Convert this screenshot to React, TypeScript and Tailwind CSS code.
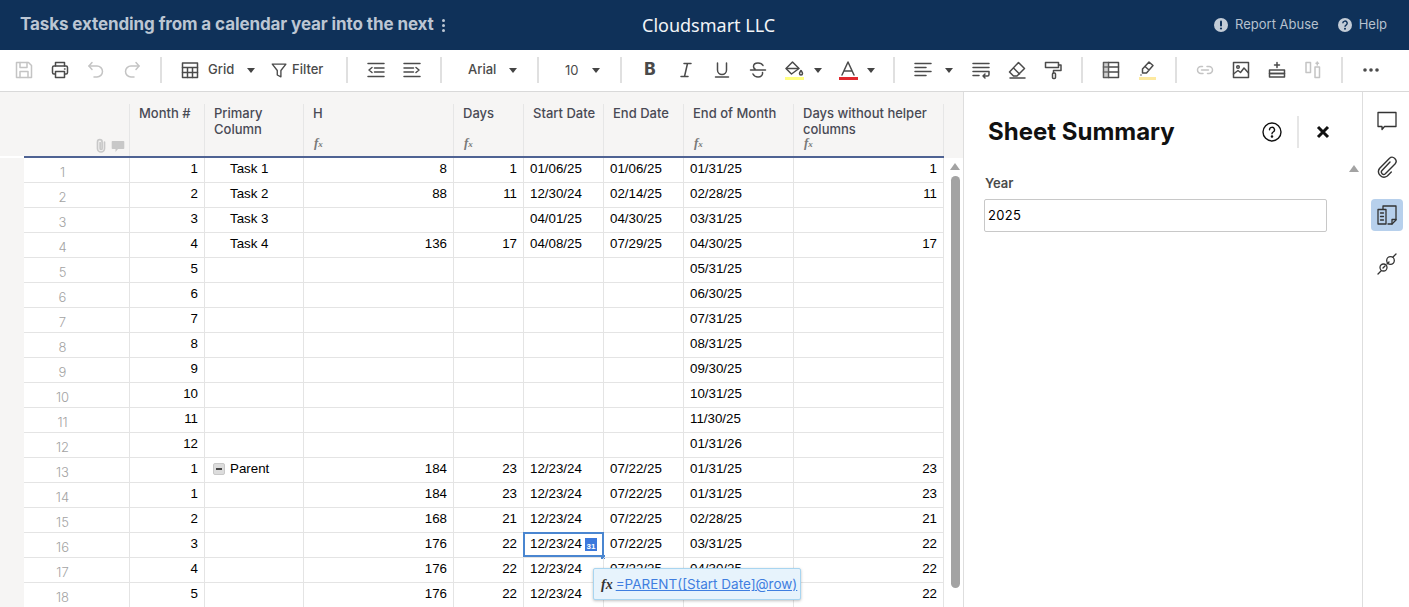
import React from "react";

const S = ({ children, w = 22, h = 22, vb = "0 0 22 22", c = "#4b4b4b", sw = 1.5 }: any) => (
  <svg width={w} height={h} viewBox={vb} fill="none" stroke={c} strokeWidth={sw} strokeLinecap="round" strokeLinejoin="round">{children}</svg>
);
const Btn = ({ children, w = "w-9" }: any) => <div className={`${w} h-full flex items-center justify-center shrink-0`}>{children}</div>;
const Sep = ({ ml, mr }: { ml: string; mr: string }) => <div className={`w-[2px] h-[26px] bg-[#e0e0e0] shrink-0 ${ml} ${mr}`} />;
const Caret = ({ cls = "" }: { cls?: string }) => (
  <svg width="8" height="5" viewBox="0 0 8 5" className={`shrink-0 ${cls}`}><path d="M0 0h8L4 5z" fill="#444" /></svg>
);
const Fx = () => (
  <span className="font-['Liberation_Serif',serif] italic font-bold text-[13px] leading-none text-[#7a7a7a]">f<span className="text-[9px]">x</span></span>
);

const widths = ["w-[75px]", "w-[99px]", "w-[150px]", "w-[70px]", "w-[80px]", "w-[80px]", "w-[110px]", "w-[150px]"];

type Row = [string, string, string, string, string, string, string, string];
const rows: Row[] = [
  ["1", "Task 1", "8", "1", "01/06/25", "01/06/25", "01/31/25", "1"],
  ["2", "Task 2", "88", "11", "12/30/24", "02/14/25", "02/28/25", "11"],
  ["3", "Task 3", "", "", "04/01/25", "04/30/25", "03/31/25", ""],
  ["4", "Task 4", "136", "17", "04/08/25", "07/29/25", "04/30/25", "17"],
  ["5", "", "", "", "", "", "05/31/25", ""],
  ["6", "", "", "", "", "", "06/30/25", ""],
  ["7", "", "", "", "", "", "07/31/25", ""],
  ["8", "", "", "", "", "", "08/31/25", ""],
  ["9", "", "", "", "", "", "09/30/25", ""],
  ["10", "", "", "", "", "", "10/31/25", ""],
  ["11", "", "", "", "", "", "11/30/25", ""],
  ["12", "", "", "", "", "", "01/31/26", ""],
  ["1", "Parent", "184", "23", "12/23/24", "07/22/25", "01/31/25", "23"],
  ["1", "", "184", "23", "12/23/24", "07/22/25", "01/31/25", "23"],
  ["2", "", "168", "21", "12/23/24", "07/22/25", "02/28/25", "21"],
  ["3", "", "176", "22", "12/23/24", "07/22/25", "03/31/25", "22"],
  ["4", "", "176", "22", "12/23/24", "07/22/25", "04/30/25", "22"],
  ["5", "", "176", "22", "12/23/24", "07/22/25", "05/31/25", "22"],
];

const heads = [
  { t: "Month #" },
  { t: "Primary Column" },
  { t: "H", fx: true },
  { t: "Days", fx: true },
  { t: "Start Date" },
  { t: "End Date" },
  { t: "End of Month", fx: true },
  { t: "Days without helper columns", fx: true },
];

function Toolbar() {
  const txt = "text-[13px] font-medium text-[#4a4a4a] font-['Inter',sans-serif]";
  return (
    <div className="h-[42px] shrink-0 bg-white border-b border-[#d9d9d9] flex items-center pl-[6px] pb-px">
      <Btn><S c="#c4c4c4"><path d="M3.5 3.5h12l3 3v12h-15z" /><path d="M7 3.5v5h7v-5M7 18.5v-6h8v6" /></S></Btn>
      <Btn><S><path d="M6.5 7V3.5h9V7" /><rect x="3.5" y="7" width="15" height="8" rx="1.5" /><rect x="6.5" y="12.5" width="9" height="6" fill="#fff" /><path d="M15.5 10h.5" /></S></Btn>
      <Btn><S c="#c4c4c4"><path d="M7 3.5 4 7l3 3.5" /><path d="M4 7h8a5 5 0 0 1 0 11H9" /></S></Btn>
      <Btn><S c="#c4c4c4"><path d="m15 3.5 3 3.5-3 3.5" /><path d="M18 7h-8a5 5 0 0 0 0 11h3" /></S></Btn>
      <Sep ml="ml-[10px]" mr="mr-[10px]" />
      <Btn><S><rect x="3.5" y="4" width="15" height="14.5" /><path d="M3.5 8.5h15M3.5 13.5h15M8.5 8.5v10M13.5 8.5v10" /></S></Btn>
      <span className={`${txt} w-[39px] shrink-0`}>Grid</span>
      <Caret />
      <div className="w-[15px] shrink-0" />
      <S w={20} h={22}><path d="M2.5 4.5h15l-5.5 7v7l-4-2v-5z" /></S>
      <span className={`${txt} ml-[2px] w-[32px] shrink-0`}>Filter</span>
      <Sep ml="ml-[22px]" mr="mr-[10px]" />
      <Btn><S><path d="M3 4.5h16M9.5 9h9.5M9.5 13h9.5M3 17.5h16M7 8.5 4 11l3 2.5" /></S></Btn>
      <Btn><S><path d="M3 4.5h16M3 9h9.5M3 13h9.5M3 17.5h16M15 8.5l3 2.5-3 2.5" /></S></Btn>
      <Sep ml="ml-[10px]" mr="mr-[26px]" />
      <span className={`${txt} w-[41px] shrink-0`}>Arial</span>
      <Caret />
      <Sep ml="ml-[20px]" mr="mr-[26px]" />
      <span className={`${txt} text-sm font-normal w-[27px] shrink-0`}>10</span>
      <Caret />
      <Sep ml="ml-[20px]" mr="mr-[10px]" />
      <Btn><span className="font-['Inter',sans-serif] font-extrabold text-[17px] text-[#4a4a4a]">B</span></Btn>
      <Btn><S><path d="M9 4.5h7M6 17.5h7M12.5 4.5l-3 13" /></S></Btn>
      <Btn><S><path d="M6.5 4v7a4.5 4.5 0 0 0 9 0V4M4.5 18h13" /></S></Btn>
      <Btn><S><path d="M16 6.5C15 4.5 13 4 11 4c-3 0-4.5 1.500-4.500 3.500 0 1 .5 2 1.500 2.500M3.500 11h15M15.500 13.500c.5 2.500-1.500 4.500-4.500 4.500-2.500 0-4-1-5-3" /></S></Btn>
      <Btn>
        <div className="flex flex-col items-center">
          <S w={20} h={17} vb="0 0 20 17"><path d="M8.500 2 2 8.500 7.500 14 15 8.500z" /><path d="M2.500 8.500h12" /><path d="M17 10.500c1 1.500 1.500 2 1.500 3a1.500 1.500 0 0 1-3 0c0-1 .5-1.500 1.500-3z" /></S>
          <div className="w-[19px] h-[3px] bg-[#ffff80]" />
        </div>
      </Btn>
      <Caret cls="ml-[2px]" />
      <div className="w-[8px] shrink-0" />
      <Btn>
        <div className="flex flex-col items-center">
          <S w={18} h={17} vb="0 0 18 17"><path d="M3 15 9 2l6 13M5 11h8" /></S>
          <div className="w-[19px] h-[3px] bg-[#e0282e]" />
        </div>
      </Btn>
      <Caret cls="ml-[1px]" />
      <Sep ml="ml-[18px]" mr="mr-[10px]" />
      <Btn><S><path d="M3 4.500h16M3 8.500h11M3 12.500h16M3 16.500h11" /></S></Btn>
      <Caret cls="ml-[4px]" />
      <div className="w-[10px] shrink-0" />
      <Btn><S><path d="M3 4.500h16M3 8.500h16M3 12.500h16M3 16.500h6M19 12.500v3a1.500 1.500 0 0 1-1.500 1.500H13M15 15l-2 2 2 2" /></S></Btn>
      <Btn><S><path d="m12.500 3.500 6 6-7.500 7.500H7.500L3.500 13zM7.500 9l6 6M4 19h15" /></S></Btn>
      <Btn><S><rect x="3.500" y="3.500" width="13" height="5" /><path d="M16.500 6h2.500v5.500h-7.500V14" /><rect x="10.500" y="14" width="3" height="5.500" rx="1" /></S></Btn>
      <Sep ml="ml-[10px]" mr="mr-[10px]" />
      <Btn><S><rect x="3.500" y="3.500" width="15" height="15" /><path d="M3.500 8h15M3.500 13h15M8.500 3.500v15" /><rect x="3.500" y="3.500" width="5" height="15" fill="#999" fillOpacity=".45" stroke="none" /></S></Btn>
      <Btn>
        <div className="flex flex-col items-center">
          <S w={20} h={17} vb="0 0 20 17"><path d="M12 2l4 3.500-6.500 7.500H5.500v-4zM8 6.500l4 3.500M4 15h.01" /></S>
          <div className="w-[17px] h-[3px] bg-[#fde9a0]" />
        </div>
      </Btn>
      <Sep ml="ml-[10px]" mr="mr-[10px]" />
      <Btn><S c="#c4c4c4"><path d="M8.500 7.500H7a3.500 3.500 0 0 0 0 7h2M13 7.500h2a3.500 3.500 0 0 1 0 7h-1.500M7.500 11h7" /></S></Btn>
      <Btn><S><rect x="3.500" y="3.500" width="15" height="15" /><circle cx="8" cy="8" r="1.300" /><path d="m3.500 15 4.500-3.500 2.500 2 3.500-4.500 4.500 5" /></S></Btn>
      <Btn><S><rect x="3.500" y="11" width="15" height="3.500" /><rect x="3.500" y="14.500" width="15" height="3.500" /><path d="M11 3.500v5M8.500 6h5" /></S></Btn>
      <Btn><S c="#c4c4c4"><rect x="4" y="3.500" width="4.500" height="10" /><rect x="13" y="8" width="4.500" height="10.500" /><path d="M15.250 3v3M14 4.200h2.500" /></S></Btn>
      <Sep ml="ml-[10px]" mr="mr-[10px]" />
      <Btn><svg width="18" height="4" viewBox="0 0 18 4" fill="#4b4b4b"><circle cx="3" cy="2" r="1.800" /><circle cx="9" cy="2" r="1.800" /><circle cx="15" cy="2" r="1.800" /></svg></Btn>
    </div>
  );
}

function Grid() {
  return (
    <div className="w-[944px] shrink-0 flex flex-col relative">
      <div className="h-[64px] bg-[#f6f5f4] flex pl-[24px] pt-[12px] shrink-0">
        <div className="w-[106px] border-r border-[#e6e6e6] flex justify-end items-end gap-[4px] pr-[4px] pb-[3px]">
          <svg width="12" height="15" viewBox="0 0 12 15" fill="none" stroke="#c8c8c8" strokeWidth="1.700" strokeLinecap="round"><path d="M9.500 4v6.500a3.500 3.500 0 0 1-7 0V4a2.300 2.300 0 0 1 4.600 0v6.500a1 1 0 0 1-2 0V4.500" /></svg>
          <svg width="14" height="13" viewBox="0 0 14 13"><path d="M1.500 1h11a.8.8 0 0 1 .8.800v6.400a.8.8 0 0 1-.8.800H7l-2.500 3V9h-3a.8.8 0 0 1-.8-.8V1.800A.8.8 0 0 1 1.500 1z" fill="#c8c8c8" /></svg>
        </div>
        {heads.map((h, i) => (
          <div key={i} className={`${widths[i]} border-r border-[#e6e6e6] pl-[9px] pr-[6px] relative shrink-0`}>
            <div className="text-[13px] leading-[16px] font-medium text-[#494a54] font-['Inter',sans-serif] pt-px">{h.t}</div>
            {h.fx && <div className="absolute left-[10px] bottom-[3px]"><Fx /></div>}
          </div>
        ))}
      </div>
      <div className="h-[2px] ml-[24px] bg-[#4f6393] shrink-0" />
      <div className="flex flex-col bg-white">
        {rows.map((r, ri) => (
          <div key={ri} className="flex h-[25px] shrink-0">
            <div className="w-[24px] bg-[#f6f5f4] shrink-0" />
            <div className="w-[106px] border-r border-b border-[#e4e4e4] shrink-0 text-center pr-[28px] pt-[5px] text-[13px] leading-[18px] text-[#a3a3a3] font-['Inter',sans-serif] font-light">{ri + 1}</div>
            {r.map((c, ci) => {
              const right = ci === 0 || ci === 2 || ci === 3 || ci === 7;
              const sel = ri === 15 && ci === 4;
              return (
                <div
                  key={ci}
                  className={`${widths[ci]} shrink-0 border-r border-b border-[#e4e4e4] relative font-['Liberation_Sans',Arial,sans-serif] text-[13.33px] leading-[22px] text-black whitespace-nowrap ${right ? "text-right pr-[6px]" : ci === 1 ? "pl-[25px]" : "pl-[6px]"}`}
                >
                  {ci === 1 && c === "Parent" && (
                    <span className="absolute left-[8px] top-[5px] w-[12px] h-[12px] rounded-[2px] bg-[#dcdcdc] border border-[#c8c8c8] flex items-center justify-center">
                      <span className="w-[6px] h-[2px] bg-[#444]" />
                    </span>
                  )}
                  {c}
                  {sel && (
                    <>
                      <span className="absolute left-[-1px] top-[-1px] w-[81px] h-[25px] border-2 border-[#4a86d0]" />
                      <span className="absolute left-[61px] top-[5px] w-[12px] h-[13px] bg-[#3b78dc] text-white text-[8px] leading-[8px] text-center pt-[5px] font-bold">31</span>
                      <span className="absolute left-[77px] top-[22px] w-[4px] h-[4px] bg-[#4a86d0]" />
                    </>
                  )}
                </div>
              );
            })}
          </div>
        ))}
      </div>
      <div className="absolute left-[593px] top-[476px] w-[208px] h-[32px] bg-[#e7f3fc] border border-[#a8d5f0] rounded-[2px] shadow-[0_1px_3px_rgba(0,0,0,0.25)] flex items-center pl-[7px]">
        <span className="font-['Liberation_Serif',serif] italic font-bold text-[14px] text-[#333] mr-[3px]">fx</span>
        <span className="text-[13.5px] text-[#3f7ee0] underline font-['Inter',sans-serif] whitespace-nowrap">=PARENT([Start Date]@row)</span>
      </div>
    </div>
  );
}

function App() {
  return (
    <div className="w-[1409px] h-[607px] overflow-hidden flex flex-col bg-white">
      <header className="h-[50px] shrink-0 bg-[#0f3159] flex items-center pl-[20px] pr-[22px]">
        <div className="w-[622px] shrink-0 flex items-center text-[17px] font-bold text-[#bcc6d3] font-['Inter',sans-serif] whitespace-nowrap tracking-[-0.1px]">
          Tasks extending from a calendar year into the next
          <span className="ml-[8px] flex flex-col gap-[2px]">
            <span className="w-[3px] h-[3px] rounded-full bg-[#bcc6d3]" />
            <span className="w-[3px] h-[3px] rounded-full bg-[#bcc6d3]" />
            <span className="w-[3px] h-[3px] rounded-full bg-[#bcc6d3]" />
          </span>
        </div>
        <div className="text-[18px] font-['Noto_Sans',sans-serif] text-[#f2f4f7] whitespace-nowrap">Cloudsmart LLC</div>
        <div className="ml-auto flex items-center text-[13px] text-[#b7c1ce] font-['Inter',sans-serif]">
          <svg width="14" height="14" viewBox="0 0 14 14" className="mr-[7px]"><circle cx="7" cy="7" r="7" fill="#c3ccd7" /><rect x="6" y="2.500" width="2" height="6" rx="1" fill="#0f3159" /><circle cx="7" cy="10.500" r="1.100" fill="#0f3159" /></svg>
          <span>Report Abuse</span>
          <svg width="14" height="14" viewBox="0 0 14 14" className="ml-[19px] mr-[7px]"><circle cx="7" cy="7" r="7" fill="#c3ccd7" /><path d="M4.800 5.300a2.200 2.200 0 1 1 3.300 1.900c-.8.500-1.100.8-1.100 1.600" fill="none" stroke="#0f3159" strokeWidth="1.500" /><circle cx="7" cy="10.800" r="1" fill="#0f3159" /></svg>
          <span>Help</span>
        </div>
      </header>
      <Toolbar />
      <div className="flex flex-1 min-h-0">
        <Grid />
        <div className="w-[19px] shrink-0 flex flex-col items-center pl-[3px]">
          <div className="h-[66px] self-stretch -ml-[3px] bg-[#f6f5f4] shrink-0" />
          <svg width="10" height="7" viewBox="0 0 10 7" className="mt-[5px]"><path d="M5 0l5 7H0z" fill="#a3a3a3" /></svg>
          <div className="w-[9px] h-[412px] mt-[6px] rounded-[5px] bg-[#a3a3a3] shrink-0" />
        </div>
        <aside className="w-[399px] shrink-0 border-l border-[#dedede] relative">
          <div className="flex items-center h-[32px] mt-[24px] pl-[24px]">
            <h2 className="text-[24px] font-bold text-[#111] font-['Inter',sans-serif] whitespace-nowrap w-[274px] shrink-0 leading-none">Sheet Summary</h2>
            <svg width="20" height="20" viewBox="0 0 20 20" fill="none" stroke="#111" strokeWidth="1.400" strokeLinecap="round"><circle cx="10" cy="10" r="9" /><path d="M7.500 7.800a2.500 2.500 0 1 1 3.700 2.200c-.8.500-1.200.9-1.200 1.700" /><circle cx="10" cy="14.500" r=".6" fill="#111" /></svg>
            <div className="w-[2px] h-[32px] bg-[#e6e6e6] ml-[15px] mr-[17px]" />
            <svg width="14" height="14" viewBox="0 0 14 14" fill="none" stroke="#111" strokeWidth="3"><path d="M2 2l10 10M12 2 2 12" /></svg>
          </div>
          <div className="pl-[21px] mt-[27px] text-[13px] leading-[16px] font-semibold text-[#4a4a4a] font-['Inter',sans-serif]">Year</div>
          <div className="ml-[20px] mt-[8px] w-[343px] h-[33px] border border-[#c8c8c8] rounded-[2px] pl-[3px] flex items-center text-[13px] tracking-[0.3px] text-black font-['Inter',sans-serif]">2025</div>
          <svg width="10" height="7" viewBox="0 0 10 7" className="absolute left-[385px] top-[73px]"><path d="M5 0l5 7H0z" fill="#a3a3a3" /></svg>
        </aside>
        <nav className="flex-1 border-l border-[#dedede] flex flex-col items-center pt-[13px] pl-[2px]">
          <div className="h-[32px] flex items-center justify-center">
            <S w={22} h={22} c="#333" sw={1.300}><path d="M2 2.500h18v14H8.500l-2.500 3v-3H2z" /></S>
          </div>
          <div className="h-[32px] mt-[14px] flex items-center justify-center">
            <S w={24} h={24} vb="0 0 24 24" c="#333" sw={1.400}><path d="M15 7 7 15.500a2.300 2.300 0 0 0 3.300 3.200L20 9a4 4 0 0 0-5.700-5.600L4.500 13.500a5.500 5.500 0 0 0 7.800 7.500l4-4" /></S>
          </div>
          <div className="w-[32px] h-[32px] mt-[16px] rounded-[4px] bg-[#b7d0ec] flex items-center justify-center">
            <S w={24} h={24} vb="0 0 24 24" c="#333" sw={1.300}><path d="M8 6V3h13v14l-4 4h-4" /><path d="M21 16.500h-4V21" /><rect x="3" y="6.500" width="8" height="14.500" /><path d="M5.500 10h3M5.500 13.500h3M5.500 17h3" /></S>
          </div>
          <div className="h-[32px] mt-[17px] flex items-center justify-center">
            <S w={24} h={24} vb="0 0 24 24" c="#333" sw={1.300}><path d="M3 22l3-3M21 2l-3 3M10 14l-2 2M14 10l-2 2" /><circle cx="8.500" cy="15.500" r="3.500" /><circle cx="15.500" cy="8.500" r="3.800" /></S>
          </div>
        </nav>
      </div>
    </div>
  );
}

export default App;
